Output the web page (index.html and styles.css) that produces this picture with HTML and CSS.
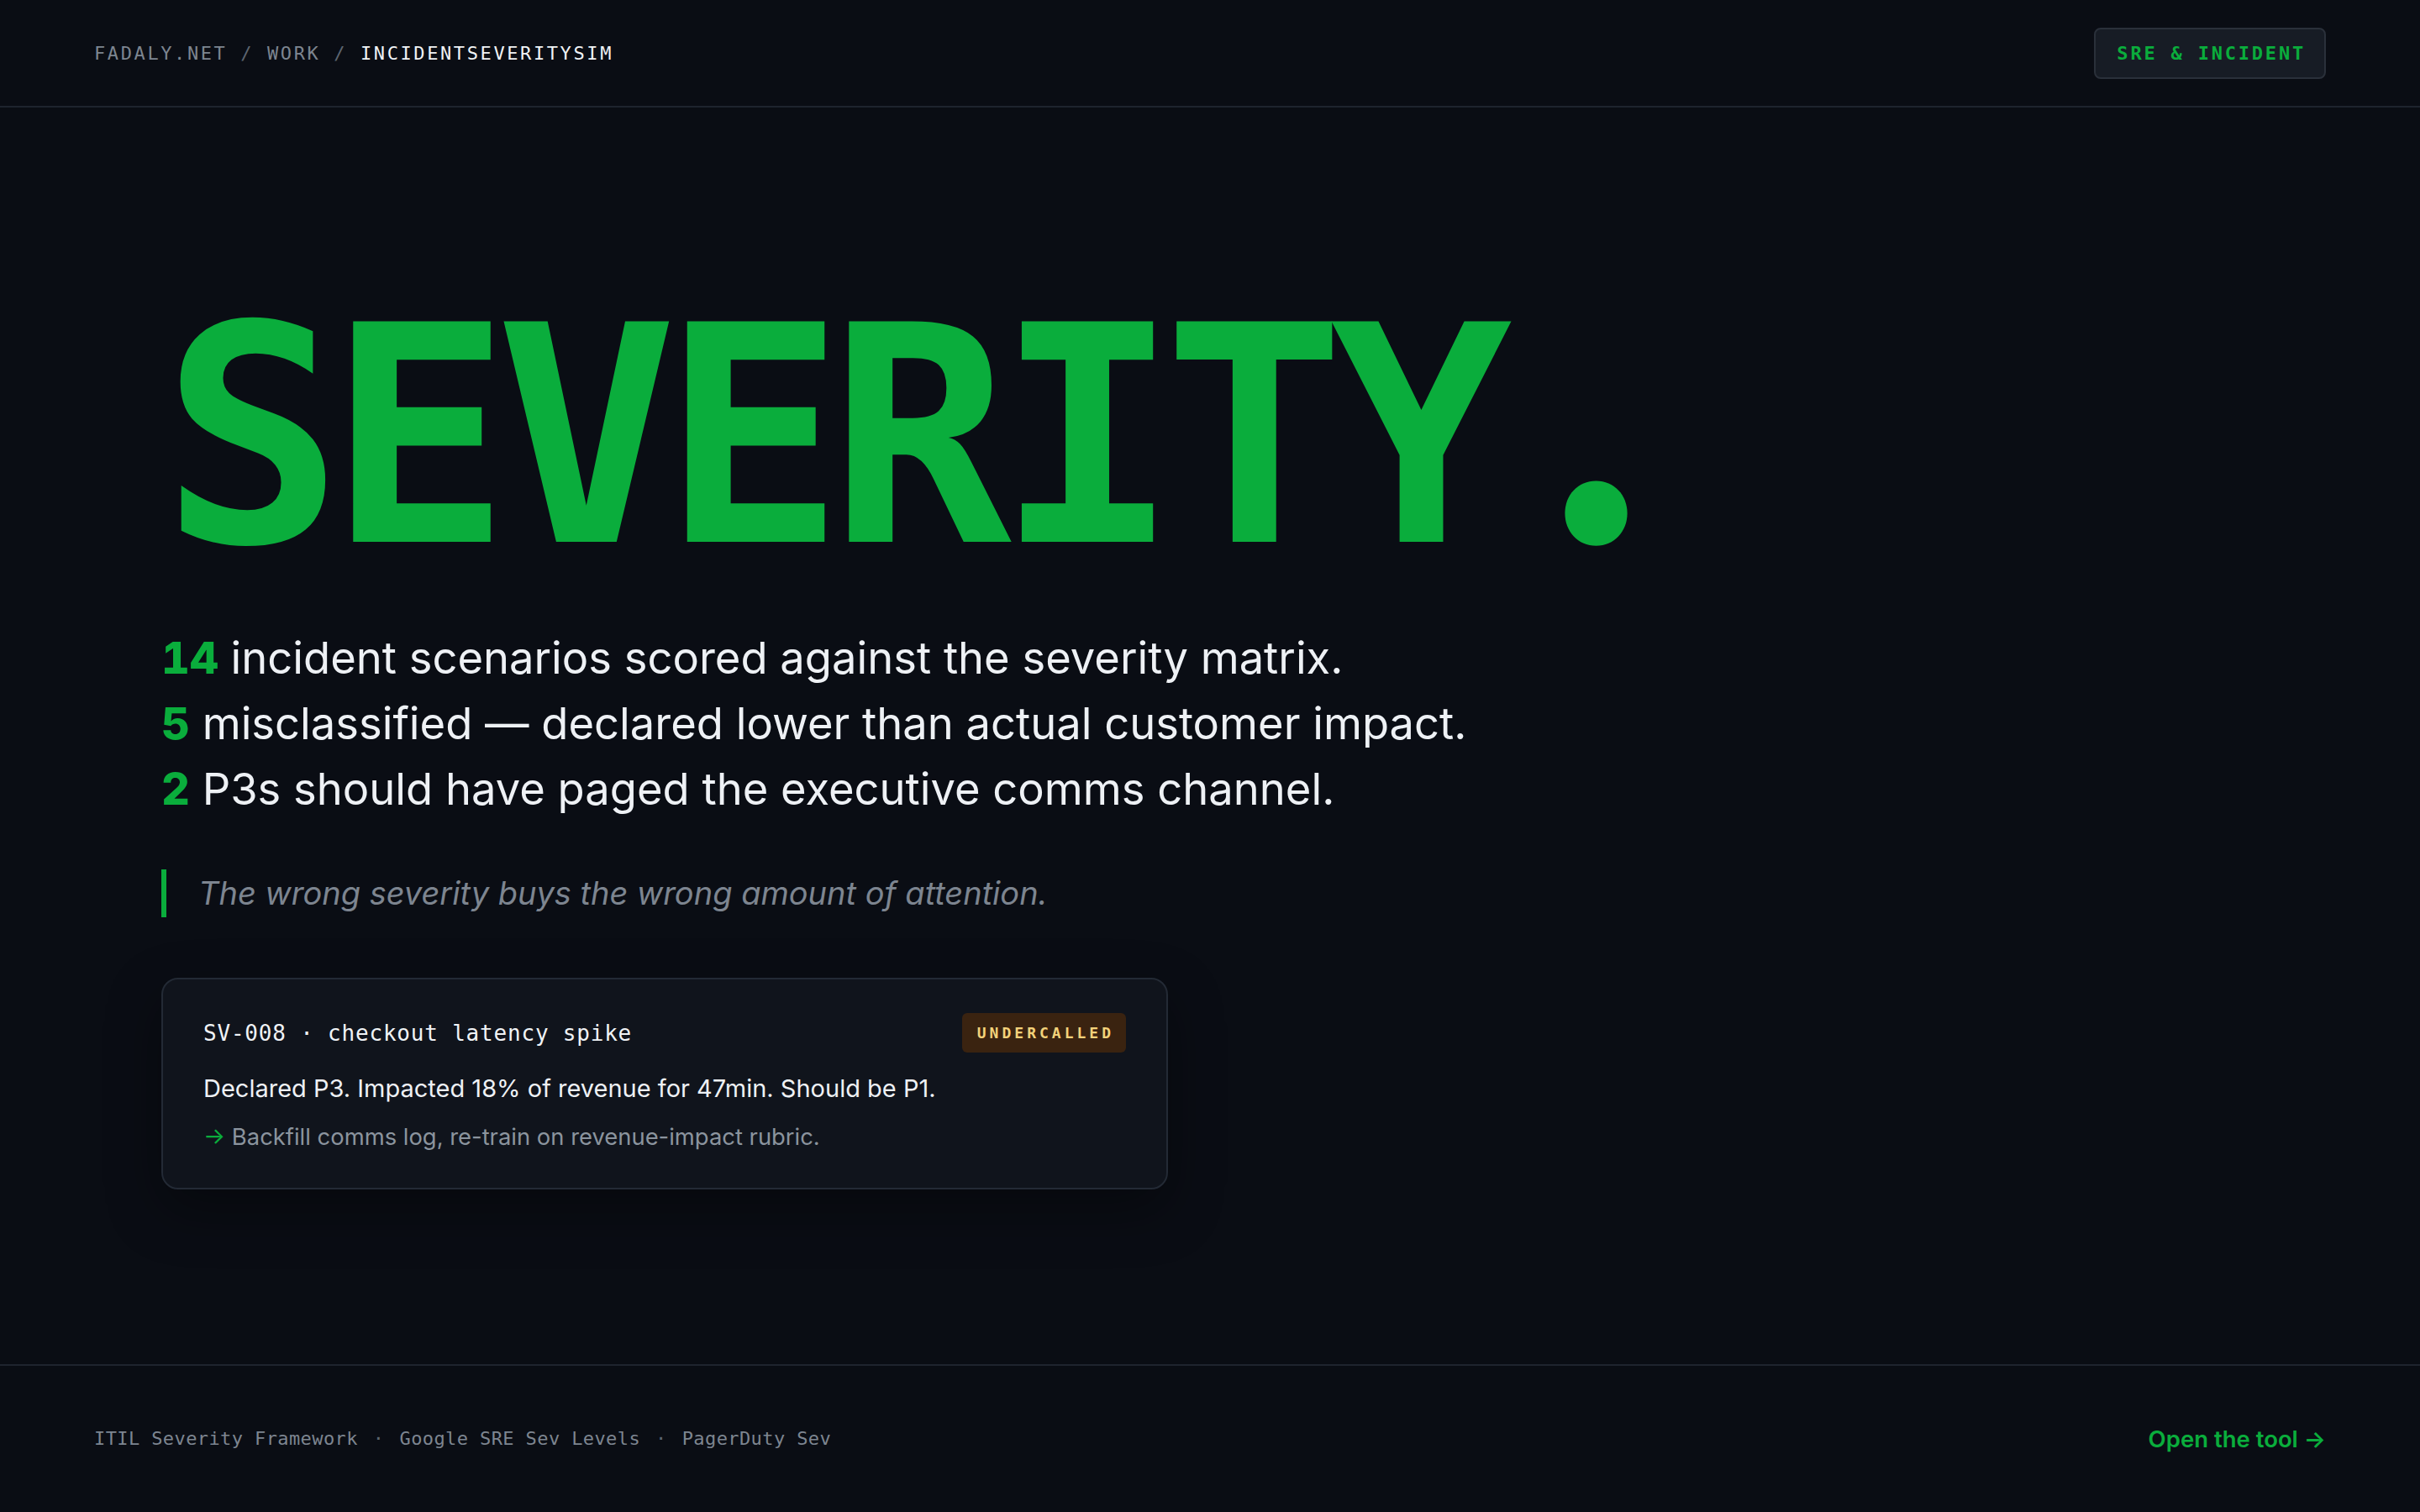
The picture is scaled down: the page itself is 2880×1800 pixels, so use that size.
FILE: index.html
```html
<!DOCTYPE html>
<html lang="en">
<head>
<meta charset="utf-8">
<title>IncidentSeveritySim — fadaly.net</title>
<link rel="stylesheet" href="styles.css">
</head>
<body>
<header class="topbar">
  <nav class="crumbs"><span class="crumb">FADALY.NET</span><span class="sep"> / </span><span class="crumb">WORK</span><span class="sep"> / </span><span class="crumb current">INCIDENTSEVERITYSIM</span></nav>
  <span class="tag">SRE &amp; INCIDENT</span>
</header>

<main class="hero">
  <h1 class="title">SEVERITY<span class="title-dot">.</span></h1>

  <div class="stats">
    <p><span class="num">14</span> incident scenarios scored against the severity matrix.</p>
    <p><span class="num">5</span> misclassified — declared lower than actual customer impact.</p>
    <p><span class="num">2</span> P3s should have paged the executive comms channel.</p>
  </div>

  <blockquote class="quote">The wrong severity buys the wrong amount of attention.</blockquote>

  <article class="card">
    <div class="card-head">
      <span class="card-id">SV-008 · checkout latency spike</span>
      <span class="badge">UNDERCALLED</span>
    </div>
    <p class="card-desc">Declared P3. Impacted 18% of revenue for 47min. Should be P1.</p>
    <p class="card-action"><span class="arrow">→</span> Backfill comms log, re-train on revenue-impact rubric.</p>
  </article>
</main>

<footer class="footer">
  <div class="refs">
    <span>ITIL Severity Framework</span><span class="dot">·</span><span>Google SRE Sev Levels</span><span class="dot">·</span><span>PagerDuty Sev</span>
  </div>
  <a class="cta" href="#">Open the tool →</a>
</footer>
</body>
</html>
```

FILE: styles.css
```css
* { box-sizing: border-box; }

html, body {
  margin: 0;
  padding: 0;
  background: #0a0d14;
  color: #e6edf3;
  font-family: "Inter", "Noto Sans", sans-serif;
}

body {
  height: 100vh;
  display: flex;
  flex-direction: column;
}

.topbar {
  flex: none;
  height: 128px;
  padding: 0 112px;
  border-bottom: 2px solid #1e242e;
  display: flex;
  align-items: center;
  justify-content: space-between;
}

.crumbs {
  font-family: "DejaVu Sans Mono", monospace;
  font-size: 22px;
  letter-spacing: 2.6px;
  color: #7d8590;
  white-space: nowrap;
}

.crumbs .sep { color: #5d6570; white-space: pre; }
.crumbs .current { color: #f0f3f6; }

.tag {
  font-family: "DejaVu Sans Mono", monospace;
  font-weight: 700;
  font-size: 22px;
  line-height: 29px;
  letter-spacing: 2.8px;
  color: #0aad3c;
  background: #171c25;
  border: 2px solid #2a303a;
  border-radius: 8px;
  padding: 14px 22px 14px 25px;
}

.hero {
  flex: 1;
  padding: 213px 192px 0;
}

.title {
  margin: 0;
  font-family: "DejaVu Sans Mono", monospace;
  font-weight: 700;
  font-size: 360px;
  line-height: 360px;
  letter-spacing: -18px;
  color: #0aad3c;
  white-space: nowrap;
}

.title-dot {
  font-family: "Noto Sans CJK SC", "Inter", sans-serif;
  font-weight: 900;
  font-size: 350px;
  line-height: 0;
  letter-spacing: 0;
  margin-left: 56px;
}

.stats {
  margin-top: 43px;
}

.stats p {
  margin: 0;
  font-size: 52.5px;
  line-height: 78px;
  font-weight: 400;
  color: #eef1f5;
}

.stats .num {
  color: #0aad3c;
  font-weight: 800;
  font-variant-numeric: tabular-nums;
}

.quote {
  margin: 57px 0 0;
  padding-left: 38px;
  border-left: 6px solid #0aad3c;
  font-style: italic;
  font-size: 38px;
  line-height: 57px;
  color: #7d8590;
}

.card {
  margin-top: 72px;
  width: 1198px;
  padding: 40px 48px;
  background: #10141c;
  border: 2px solid #232a35;
  border-radius: 20px;
  box-shadow: 0 24px 64px rgba(0, 0, 0, 0.35);
}

.card-head {
  display: flex;
  align-items: center;
  justify-content: space-between;
}

.card-id {
  font-family: "DejaVu Sans Mono", monospace;
  font-size: 26px;
  letter-spacing: 0.8px;
  color: #f0f3f6;
}

.badge {
  font-family: "DejaVu Sans Mono", monospace;
  font-weight: 700;
  font-size: 18px;
  line-height: 23px;
  letter-spacing: 4px;
  color: #f3d27a;
  background: #3a2310;
  border-radius: 6px;
  padding: 12px 14px 12px 18px;
}

.card-desc {
  margin: 20px 0 0;
  font-size: 29px;
  line-height: 45px;
  color: #eef1f5;
}

.card-action {
  margin: 14px 0 0;
  font-size: 27.4px;
  line-height: 42px;
  color: #8b949e;
}

.card-action .arrow { color: #0aad3c; }

.footer {
  flex: none;
  border-top: 2px solid #1e242e;
  padding: 70px 112px;
  display: flex;
  align-items: center;
  justify-content: space-between;
}

.refs {
  display: flex;
  align-items: center;
  gap: 18px;
  font-family: "DejaVu Sans Mono", monospace;
  font-size: 22px;
  line-height: 34px;
  letter-spacing: 0.4px;
  color: #7d8590;
}

.refs .dot { color: #5d6570; }

.cta {
  font-size: 27.5px;
  line-height: 34px;
  font-weight: 600;
  color: #0aad3c;
  text-decoration: none;
}
```
